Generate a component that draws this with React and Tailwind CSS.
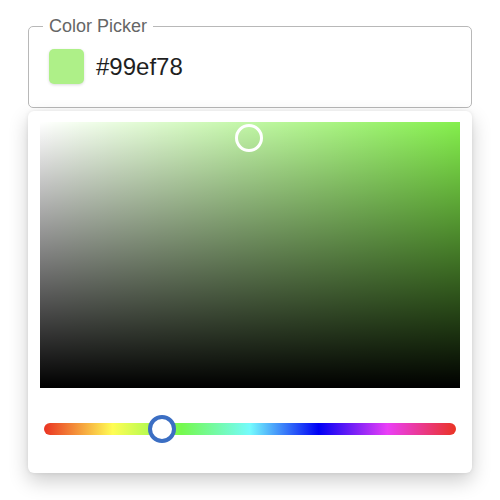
export default function App() {
  const hueGradient =
    "linear-gradient(to right, #ea3323 0%, #fffd54 16.67%, #75f94d 33.33%, #74fbfd 50%, #0000f5 66.67%, #ea3ff7 83.33%, #ea3323 100%)";
  return (
    <div
      className="w-[500px] h-[500px] bg-white pt-[16px] px-[28px]"
      style={{ fontFamily: '"Liberation Sans", Arial, sans-serif' }}
    >
      <fieldset className="border border-[#b8b8b8] rounded-[5px] px-[14px] pb-[23px]">
        <legend className="px-[6px] text-[18px] leading-[21px] text-[#666666]">
          Color Picker
        </legend>
        <div className="flex items-center gap-[12px] pl-[6px] pt-[12px]">
          <div className="w-[35px] h-[35px] rounded-[5px] bg-[#aef088] shadow-[0_1px_3px_rgba(0,0,0,0.15)]" />
          <span className="text-[24px] leading-[28px] text-[#1f1f1f]">#99ef78</span>
        </div>
      </fieldset>
      <div className="mt-[3px] w-[444px] bg-white rounded-[6px] shadow-[0_8px_20px_rgba(0,0,0,0.2),0_0_4px_rgba(0,0,0,0.08)] pt-[11px] pb-[38px]">
        <div className="px-[12px]">
          <div className="relative w-[420px] h-[266px] bg-[#84ef4c]">
            <div className="absolute inset-0 bg-gradient-to-r from-white to-transparent" />
            <div className="absolute inset-0 bg-gradient-to-b from-transparent to-black" />
            <div className="absolute left-[195px] top-[2px] w-[28px] h-[28px] rounded-full border-[3px] border-white" />
          </div>
        </div>
        <div className="px-[16px] pt-[35px]">
          <div className="relative h-[12px] rounded-full" style={{ background: hueGradient }}>
            <div className="absolute left-[104px] top-[-8px] w-[28px] h-[28px] rounded-full border-[4px] border-[#3b6ec3] bg-white" />
          </div>
        </div>
      </div>
    </div>
  );
}
